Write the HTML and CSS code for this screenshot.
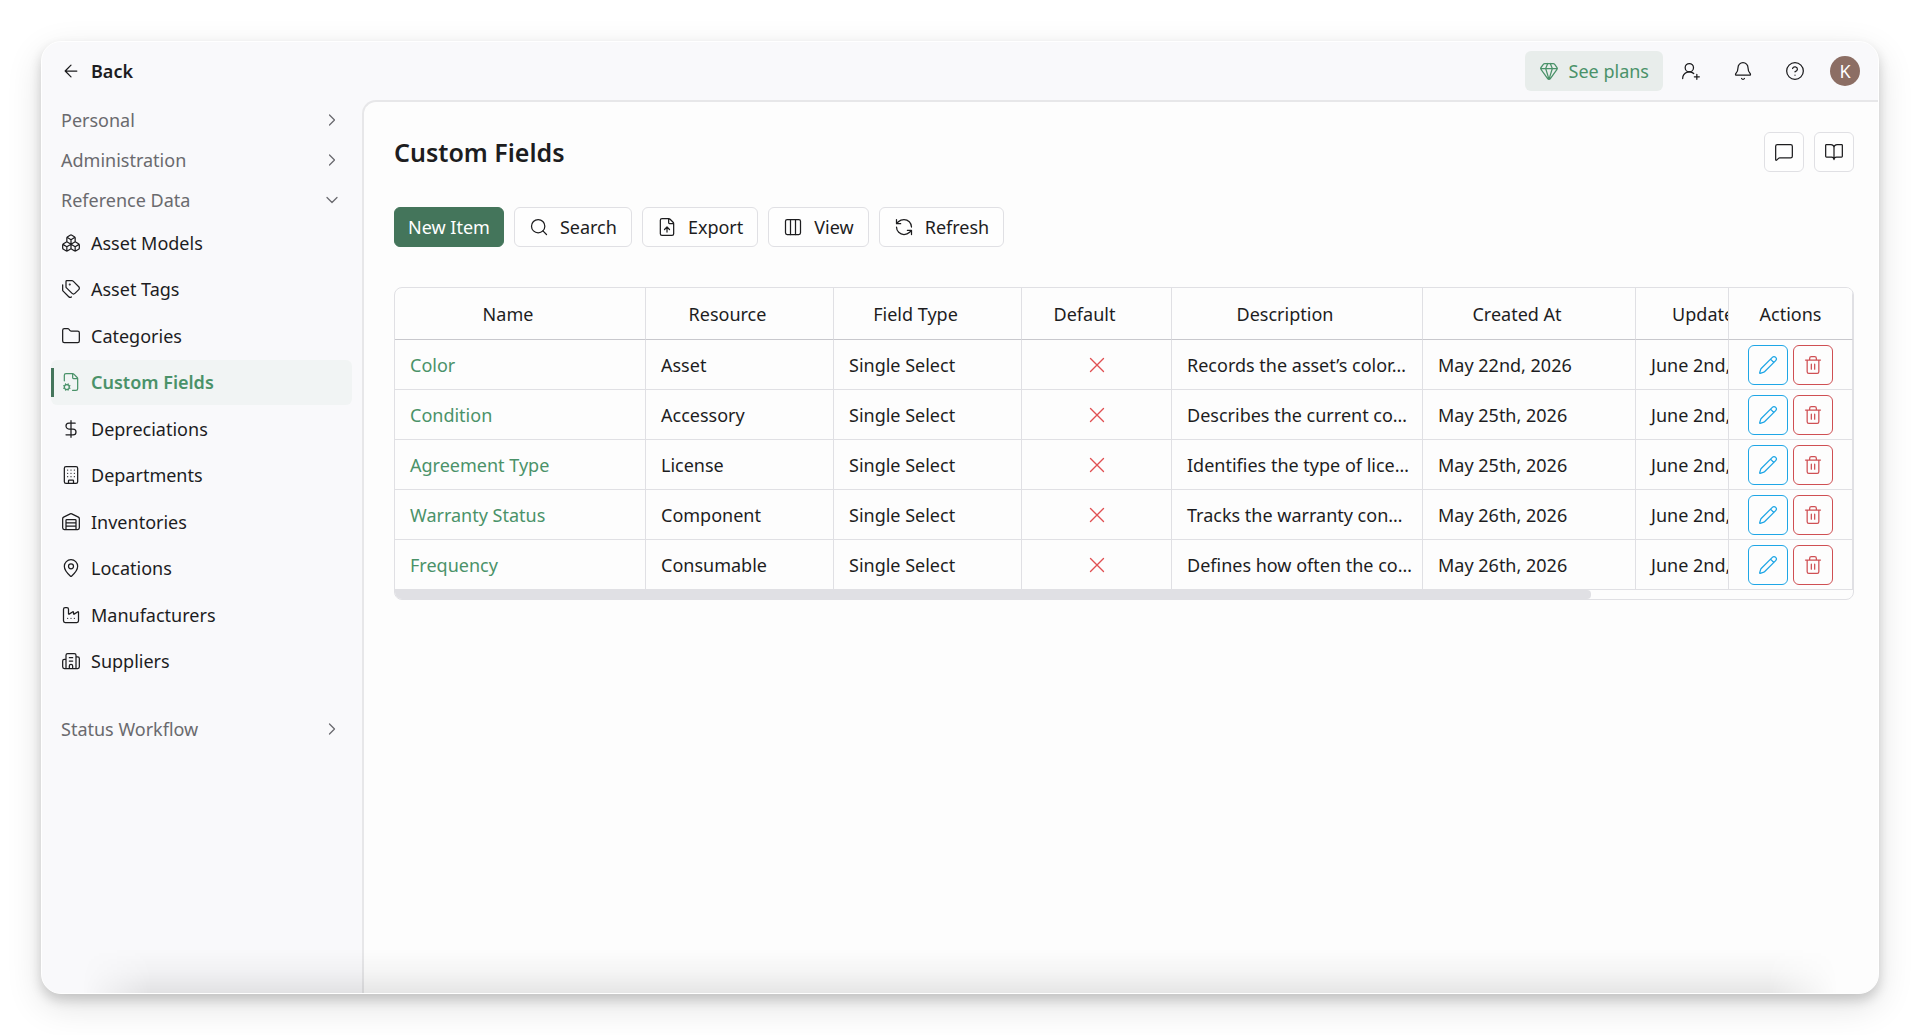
FILE: index.html
```html
<!DOCTYPE html>
<html lang="en">
<head>
    <meta charset="UTF-8">
    <meta name="viewport" content="width=device-width, initial-scale=1.0">
    <title>Custom Fields</title>
    <link rel="stylesheet" href="styles.css">
</head>
<body>

    <!-- Icon sprite -->
    <svg class="sprite" aria-hidden="true">
        <symbol id="arrow-left" viewBox="0 0 24 24"><path d="m12 19-7-7 7-7M19 12H5"/></symbol>
        <symbol id="chevron-right" viewBox="0 0 24 24"><path d="m9 18 6-6-6-6"/></symbol>
        <symbol id="chevron-down" viewBox="0 0 24 24"><path d="m6 9 6 6 6-6"/></symbol>
        <symbol id="gem" viewBox="0 0 24 24"><path d="M10.5 3 8 9l4 13 4-13-2.5-6M17 3a2 2 0 0 1 1.6.8l3 4a2 2 0 0 1 .013 2.382l-7.99 10.986a2 2 0 0 1-3.247 0l-7.99-10.986A2 2 0 0 1 2.4 7.8l2.998-3.997A2 2 0 0 1 7 3zM2 9h20"/></symbol>
        <symbol id="user-plus" viewBox="0 0 24 24"><path d="M2 21a8 8 0 0 1 13.292-6M19 16v6M22 19h-6"/><circle cx="10" cy="8" r="5"/></symbol>
        <symbol id="bell" viewBox="0 0 24 24"><path d="M10.268 21a2 2 0 0 0 3.464 0M3.262 15.326A1 1 0 0 0 4 17h16a1 1 0 0 0 .74-1.673C19.41 13.956 18 12.499 18 8A6 6 0 0 0 6 8c0 4.499-1.411 5.956-2.738 7.326"/></symbol>
        <symbol id="help" viewBox="0 0 24 24"><circle cx="12" cy="12" r="10"/><path d="M9.09 9a3 3 0 0 1 5.83 1c0 2-3 3-3 3M12 17h.01"/></symbol>
        <symbol id="message" viewBox="0 0 24 24"><path d="M22 17a2 2 0 0 1-2 2H6.828a2 2 0 0 0-1.414.586l-2.202 2.202A.71.71 0 0 1 2 21.286V5a2 2 0 0 1 2-2h16a2 2 0 0 1 2 2z"/></symbol>
        <symbol id="book-open" viewBox="0 0 24 24"><path d="M12 7v14M3 18a1 1 0 0 1-1-1V4a1 1 0 0 1 1-1h5a4 4 0 0 1 4 4 4 4 0 0 1 4-4h5a1 1 0 0 1 1 1v13a1 1 0 0 1-1 1h-6a3 3 0 0 0-3 3 3 3 0 0 0-3-3z"/></symbol>
        <symbol id="boxes" viewBox="0 0 24 24"><path d="M2.97 12.92A2 2 0 0 0 2 14.63v3.24a2 2 0 0 0 .97 1.71l3 1.8a2 2 0 0 0 2.06 0L12 19v-5.5l-5-3-4.03 2.42ZM7 16.5l-4.74-2.85M7 16.5l5-3M7 16.5v5.17M12 13.5V19l3.97 2.38a2 2 0 0 0 2.06 0l3-1.8a2 2 0 0 0 .97-1.71v-3.24a2 2 0 0 0-.97-1.71L17 10.5l-5 3ZM17 16.5l-5-3M17 16.5l4.74-2.85M17 16.5v5.17M7.97 4.42A2 2 0 0 0 7 6.13v4.37l5 3 5-3V6.13a2 2 0 0 0-.97-1.71l-3-1.8a2 2 0 0 0-2.06 0l-3 1.8ZM12 8 7.26 5.15M12 8l4.74-2.85M12 13.5V8"/></symbol>
        <symbol id="tags" viewBox="0 0 24 24"><path d="M13.172 2a2 2 0 0 1 1.414.586l6.71 6.71a2.4 2.4 0 0 1 0 3.408l-4.592 4.592a2.4 2.4 0 0 1-3.408 0l-6.71-6.71A2 2 0 0 1 6 9.172V3a1 1 0 0 1 1-1zM2 7v6.172a2 2 0 0 0 .586 1.414l6.71 6.71a2.4 2.4 0 0 0 3.191.193"/><circle cx="10.5" cy="6.5" r=".5"/></symbol>
        <symbol id="folder" viewBox="0 0 24 24"><path d="M20 20a2 2 0 0 0 2-2V8a2 2 0 0 0-2-2h-7.9a2 2 0 0 1-1.69-.9L9.6 3.9A2 2 0 0 0 7.93 3H4a2 2 0 0 0-2 2v13a2 2 0 0 0 2 2Z"/></symbol>
        <symbol id="file-cog" viewBox="0 0 24 24"><path d="M13.85 22H18a2 2 0 0 0 2-2V8a2 2 0 0 0-.586-1.414l-4-4A2 2 0 0 0 14 2H6a2 2 0 0 0-2 2v6.6M14 2v5a1 1 0 0 0 1 1h5M3.305 19.53l.923-.382M4.228 16.852l-.924-.383M5.852 15.228l-.383-.923M5.852 20.772l-.383.924M8.148 15.228l.383-.923M8.53 21.696l-.382-.924M9.773 16.852l.922-.383M9.773 19.148l.922.383"/><circle cx="7" cy="18" r="3"/></symbol>
        <symbol id="dollar" viewBox="0 0 24 24"><path d="M12 2v20M17 5H9.5a3.5 3.5 0 0 0 0 7h5a3.5 3.5 0 0 1 0 7H6"/></symbol>
        <symbol id="building" viewBox="0 0 24 24"><rect x="4" y="2" width="16" height="20" rx="2"/><path d="M9 22v-3a1 1 0 0 1 1-1h4a1 1 0 0 1 1 1v3M8 6h.01M12 6h.01M16 6h.01M8 10h.01M12 10h.01M16 10h.01M8 14h.01M12 14h.01M16 14h.01"/></symbol>
        <symbol id="warehouse" viewBox="0 0 24 24"><path d="M18 21V10a1 1 0 0 0-1-1H7a1 1 0 0 0-1 1v11M22 19a2 2 0 0 1-2 2H4a2 2 0 0 1-2-2V8a2 2 0 0 1 1.132-1.803l7.95-3.974a2 2 0 0 1 1.837 0l7.948 3.974A2 2 0 0 1 22 8zM6 13h12M6 17h12"/></symbol>
        <symbol id="map-pin" viewBox="0 0 24 24"><path d="M20 10c0 4.993-5.539 10.193-7.399 11.799a1 1 0 0 1-1.202 0C9.539 20.193 4 14.993 4 10a8 8 0 0 1 16 0"/><circle cx="12" cy="10" r="3"/></symbol>
        <symbol id="factory" viewBox="0 0 24 24"><path d="M8 16h.01M12 16h.01M16 16h.01M3 19a2 2 0 0 0 2 2h14a2 2 0 0 0 2-2V8.5a.5.5 0 0 0-.769-.422l-4.462 2.844A.5.5 0 0 1 15 10.5v-2a.5.5 0 0 0-.769-.422L9.77 10.922A.5.5 0 0 1 9 10.5V5a2 2 0 0 0-2-2H5a2 2 0 0 0-2 2z"/></symbol>
        <symbol id="suppliers" viewBox="0 0 24 24"><path d="M10 12h4M10 8h4M14 21v-3a2 2 0 0 0-4 0v3M6 10H4a2 2 0 0 0-2 2v7a2 2 0 0 0 2 2h16a2 2 0 0 0 2-2V9a2 2 0 0 0-2-2h-2M6 21V5a2 2 0 0 1 2-2h8a2 2 0 0 1 2 2v16"/></symbol>
        <symbol id="search" viewBox="0 0 24 24"><circle cx="11" cy="11" r="8"/><path d="m21 21-4.3-4.3"/></symbol>
        <symbol id="file-up" viewBox="0 0 24 24"><path d="M6 22a2 2 0 0 1-2-2V4a2 2 0 0 1 2-2h8a2.4 2.4 0 0 1 1.704.706l3.588 3.588A2.4 2.4 0 0 1 20 8v12a2 2 0 0 1-2 2zM14 2v5a1 1 0 0 0 1 1h5M12 12v6M15 15l-3-3-3 3"/></symbol>
        <symbol id="columns" viewBox="0 0 24 24"><rect x="3" y="3" width="18" height="18" rx="2"/><path d="M9 3v18M15 3v18"/></symbol>
        <symbol id="refresh" viewBox="0 0 24 24"><path d="M21 12a9 9 0 0 0-9-9 9.75 9.75 0 0 0-6.74 2.74L3 8M3 3v5h5M3 12a9 9 0 0 0 9 9 9.75 9.75 0 0 0 6.74-2.74L21 16M16 16h5v5"/></symbol>
        <symbol id="cross" viewBox="0 0 24 24"><path d="M18 6 6 18M6 6l12 12"/></symbol>
        <symbol id="pencil" viewBox="0 0 24 24"><path d="M21.174 6.812a1 1 0 0 0-3.986-3.987L3.842 16.174a2 2 0 0 0-.5.83l-1.321 4.352a.5.5 0 0 0 .623.622l4.353-1.32a2 2 0 0 0 .83-.497zM15 5l4 4"/></symbol>
        <symbol id="trash" viewBox="0 0 24 24"><path d="M3 6h18M19 6v14a2 2 0 0 1-2 2H7a2 2 0 0 1-2-2V6M8 6V4a2 2 0 0 1 2-2h4a2 2 0 0 1 2 2v2M10 11v6M14 11v6"/></symbol>
    </svg>

    <div class="window">

        <!-- Top Bar -->
        <header class="topbar">
            <a class="back" href="#"><svg class="icon"><use href="#arrow-left"/></svg>Back</a>
            <div class="topbar-actions">
                <button class="plans" type="button"><svg class="icon"><use href="#gem"/></svg>See plans</button>
                <button class="icon-btn" type="button" aria-label="Invite user"><svg class="icon"><use href="#user-plus"/></svg></button>
                <button class="icon-btn" type="button" aria-label="Notifications"><svg class="icon"><use href="#bell"/></svg></button>
                <button class="icon-btn" type="button" aria-label="Help"><svg class="icon"><use href="#help"/></svg></button>
                <button class="avatar" type="button">K</button>
            </div>
        </header>

        <div class="body">

            <!-- Sidebar -->
            <nav class="sidebar">
                <button class="group" type="button">Personal<svg class="icon"><use href="#chevron-right"/></svg></button>
                <button class="group" type="button">Administration<svg class="icon"><use href="#chevron-right"/></svg></button>
                <button class="group" type="button">Reference Data<svg class="icon"><use href="#chevron-down"/></svg></button>
                <div class="links">
                    <a href="#"><svg class="icon"><use href="#boxes"/></svg>Asset Models</a>
                    <a href="#"><svg class="icon"><use href="#tags"/></svg>Asset Tags</a>
                    <a href="#"><svg class="icon"><use href="#folder"/></svg>Categories</a>
                    <a href="#" class="active"><svg class="icon"><use href="#file-cog"/></svg>Custom Fields</a>
                    <a href="#"><svg class="icon"><use href="#dollar"/></svg>Depreciations</a>
                    <a href="#"><svg class="icon"><use href="#building"/></svg>Departments</a>
                    <a href="#"><svg class="icon"><use href="#warehouse"/></svg>Inventories</a>
                    <a href="#"><svg class="icon"><use href="#map-pin"/></svg>Locations</a>
                    <a href="#"><svg class="icon"><use href="#factory"/></svg>Manufacturers</a>
                    <a href="#"><svg class="icon"><use href="#suppliers"/></svg>Suppliers</a>
                </div>
                <button class="group" type="button">Status Workflow<svg class="icon"><use href="#chevron-right"/></svg></button>
            </nav>

            <!-- Main Content -->
            <main class="content">
                <div class="page-head">
                    <h1>Custom Fields</h1>
                    <div class="page-tools">
                        <button class="btn square" type="button" aria-label="Feedback"><svg class="icon"><use href="#message"/></svg></button>
                        <button class="btn square" type="button" aria-label="Documentation"><svg class="icon"><use href="#book-open"/></svg></button>
                    </div>
                </div>

                <div class="toolbar">
                    <button class="btn primary" type="button">New Item</button>
                    <button class="btn" type="button"><svg class="icon"><use href="#search"/></svg>Search</button>
                    <button class="btn" type="button"><svg class="icon"><use href="#file-up"/></svg>Export</button>
                    <button class="btn" type="button"><svg class="icon"><use href="#columns"/></svg>View</button>
                    <button class="btn" type="button"><svg class="icon"><use href="#refresh"/></svg>Refresh</button>
                </div>

                <div class="table-card">
                    <div class="table-scroll">
                        <table>
                            <colgroup>
                                <col class="col-wide">
                                <col class="col-mid">
                                <col class="col-mid">
                                <col class="col-narrow">
                                <col class="col-wide">
                                <col class="col-created">
                                <col class="col-updated">
                                <col>
                                <col class="col-actions">
                            </colgroup>
                            <thead>
                                <tr>
                                    <th>Name</th>
                                    <th>Resource</th>
                                    <th>Field Type</th>
                                    <th>Default</th>
                                    <th>Description</th>
                                    <th>Created At</th>
                                    <th>Updated At</th>
                                    <th></th>
                                    <th class="actions">Actions</th>
                                </tr>
                            </thead>
                            <tbody>
                                <tr>
                                    <td><a href="#">Color</a></td>
                                    <td>Asset</td>
                                    <td>Single Select</td>
                                    <td class="flag"><svg class="icon"><use href="#cross"/></svg></td>
                                    <td>Records the asset’s color…</td>
                                    <td>May 22nd, 2026</td>
                                    <td>June 2nd, 2026</td>
                                    <td></td>
                                    <td class="actions"><div class="row-actions">
                                        <button class="edit" type="button" aria-label="Edit"><svg class="icon"><use href="#pencil"/></svg></button>
                                        <button class="delete" type="button" aria-label="Delete"><svg class="icon"><use href="#trash"/></svg></button>
                                    </div></td>
                                </tr>
                                <tr>
                                    <td><a href="#">Condition</a></td>
                                    <td>Accessory</td>
                                    <td>Single Select</td>
                                    <td class="flag"><svg class="icon"><use href="#cross"/></svg></td>
                                    <td>Describes the current co…</td>
                                    <td>May 25th, 2026</td>
                                    <td>June 2nd, 2026</td>
                                    <td></td>
                                    <td class="actions"><div class="row-actions">
                                        <button class="edit" type="button" aria-label="Edit"><svg class="icon"><use href="#pencil"/></svg></button>
                                        <button class="delete" type="button" aria-label="Delete"><svg class="icon"><use href="#trash"/></svg></button>
                                    </div></td>
                                </tr>
                                <tr>
                                    <td><a href="#">Agreement Type</a></td>
                                    <td>License</td>
                                    <td>Single Select</td>
                                    <td class="flag"><svg class="icon"><use href="#cross"/></svg></td>
                                    <td>Identifies the type of lice…</td>
                                    <td>May 25th, 2026</td>
                                    <td>June 2nd, 2026</td>
                                    <td></td>
                                    <td class="actions"><div class="row-actions">
                                        <button class="edit" type="button" aria-label="Edit"><svg class="icon"><use href="#pencil"/></svg></button>
                                        <button class="delete" type="button" aria-label="Delete"><svg class="icon"><use href="#trash"/></svg></button>
                                    </div></td>
                                </tr>
                                <tr>
                                    <td><a href="#">Warranty Status</a></td>
                                    <td>Component</td>
                                    <td>Single Select</td>
                                    <td class="flag"><svg class="icon"><use href="#cross"/></svg></td>
                                    <td>Tracks the warranty con…</td>
                                    <td>May 26th, 2026</td>
                                    <td>June 2nd, 2026</td>
                                    <td></td>
                                    <td class="actions"><div class="row-actions">
                                        <button class="edit" type="button" aria-label="Edit"><svg class="icon"><use href="#pencil"/></svg></button>
                                        <button class="delete" type="button" aria-label="Delete"><svg class="icon"><use href="#trash"/></svg></button>
                                    </div></td>
                                </tr>
                                <tr>
                                    <td><a href="#">Frequency</a></td>
                                    <td>Consumable</td>
                                    <td>Single Select</td>
                                    <td class="flag"><svg class="icon"><use href="#cross"/></svg></td>
                                    <td>Defines how often the co…</td>
                                    <td>May 26th, 2026</td>
                                    <td>June 2nd, 2026</td>
                                    <td></td>
                                    <td class="actions"><div class="row-actions">
                                        <button class="edit" type="button" aria-label="Edit"><svg class="icon"><use href="#pencil"/></svg></button>
                                        <button class="delete" type="button" aria-label="Delete"><svg class="icon"><use href="#trash"/></svg></button>
                                    </div></td>
                                </tr>
                            </tbody>
                        </table>
                    </div>
                    <div class="scrollbar"><div class="thumb"></div></div>
                </div>
            </main>
        </div>
    </div>

</body>
</html>
```
FILE: styles.css
```css
* {
    box-sizing: border-box;
}

body {
    margin: 0;
    min-height: 100vh;
    padding: 41px;
    display: flex;
    background-color: #fff;
    color: #1d1d1f;
    font-family: "Noto Sans", sans-serif;
    font-size: 18px;
    line-height: 24px;
}

a {
    color: inherit;
    text-decoration: none;
}

button {
    padding: 0;
    border: none;
    background: none;
    color: inherit;
    font: inherit;
    cursor: pointer;
}

.sprite {
    display: none;
}

.icon {
    width: 20px;
    height: 20px;
    flex: none;
    fill: none;
    stroke: currentColor;
    stroke-width: 1.5;
    stroke-linecap: round;
    stroke-linejoin: round;
}

/* Window */
.window {
    position: relative;
    flex: 1;
    min-width: 0;
    display: flex;
    flex-direction: column;
    overflow: hidden;
    border: 1px solid #fff;
    border-radius: 20px;
    background-color: #f9f9fb;
    box-shadow: 0 6px 12px rgba(0, 0, 0, 0.16), 0 12px 36px rgba(0, 0, 0, 0.12);
}

/* soft shade along the bottom edge */
.window::after {
    content: "";
    position: absolute;
    left: 40px;
    right: 40px;
    bottom: 0;
    height: 44px;
    background: linear-gradient(transparent, rgba(0, 0, 0, 0.03) 50%, rgba(0, 0, 0, 0.09));
    mask-image: linear-gradient(to right, transparent, #000 70px, #000 calc(100% - 70px), transparent);
    pointer-events: none;
}

/* Top bar */
.topbar {
    height: 58px;
    padding: 0 18px 0 19px;
    display: flex;
    align-items: center;
    justify-content: space-between;
}

.back {
    display: flex;
    align-items: center;
    gap: 10px;
    font-weight: 600;
}

.topbar-actions {
    display: flex;
    align-items: center;
    gap: 12px;
}

.plans {
    height: 40px;
    padding: 0 14px;
    display: flex;
    align-items: center;
    gap: 10px;
    border-radius: 6px;
    background-color: #e8edeb;
    color: #4a9269;
}

.icon-btn {
    width: 40px;
    height: 40px;
    display: flex;
    align-items: center;
    justify-content: center;
}

.plans + .icon-btn {
    margin-left: -4px;
}

.avatar {
    width: 30px;
    height: 30px;
    margin-left: 3px;
    border-radius: 50%;
    background-color: #8c6e64;
    color: #fff;
    font-size: 18px;
}

/* Layout */
.body {
    flex: 1;
    display: flex;
    min-width: 0;
}

.sidebar {
    width: 320px;
    flex: none;
    padding: 0 10px 0 9px;
    display: flex;
    flex-direction: column;
}

.group {
    height: 40px;
    padding: 0 10px;
    display: flex;
    align-items: center;
    justify-content: space-between;
    color: #6a6a6e;
}

.links {
    height: 464px;
    margin-bottom: 25px;
    display: grid;
    grid-auto-rows: 1fr;
    gap: 1px;
}

.links a {
    position: relative;
    padding: 0 10px;
    display: flex;
    align-items: center;
    gap: 10px;
    border-radius: 6px;
}

.links a.active {
    background-color: #f1f4f4;
    color: #4a9269;
    font-weight: 600;
}

.links a.active::before {
    content: "";
    position: absolute;
    left: 0;
    top: 8px;
    bottom: 8px;
    width: 3px;
    background-color: #44755b;
}

.content {
    flex: 1;
    min-width: 0;
    padding: 30px 24px 30px 30px;
    border-top: 2px solid #e7e7e9;
    border-left: 2px solid #e7e7e9;
    border-top-left-radius: 14px;
    background-color: #fdfdfd;
}

/* Page header */
.page-head {
    display: flex;
    align-items: center;
    justify-content: space-between;
    margin-bottom: 35px;
}

h1 {
    margin: 0;
    font-size: 25px;
    line-height: 36px;
    font-weight: 600;
}

.page-tools,
.toolbar {
    display: flex;
    gap: 10px;
}

.btn {
    height: 40px;
    padding: 0 14px;
    display: flex;
    align-items: center;
    justify-content: center;
    gap: 11px;
    border: 1px solid #e0e0e4;
    border-radius: 6px;
    background-color: #fefefe;
}

.btn.square {
    width: 40px;
    padding: 0;
}

.btn.primary {
    padding: 0 13px;
    border-color: #44755b;
    background-color: #44755b;
    color: #fff;
}

/* Table */
.table-card {
    margin-top: 40px;
    overflow: hidden;
    border: 1px solid #e0e0e4;
    border-radius: 8px;
}

.table-scroll {
    overflow-x: auto;
    scrollbar-width: none;
}

table {
    width: 100%;
    min-width: 1780px;
    table-layout: fixed;
    border-collapse: separate;
    border-spacing: 0;
}

.col-wide {
    width: 251px;
}

.col-mid {
    width: 188px;
}

.col-narrow {
    width: 150px;
}

.col-created {
    width: 213px;
}

.col-updated {
    width: 193px;
}

.col-actions {
    width: 125px;
}

th,
td {
    height: 50px;
    padding: 0 15px;
    border-right: 1px solid #e0e0e4;
    border-bottom: 1px solid #e0e0e4;
    text-align: left;
    white-space: nowrap;
    overflow: hidden;
}

th {
    height: 52px;
    padding-right: 39px;
    border-bottom-color: #c8c8cd;
    font-weight: 400;
    text-align: center;
}

td a {
    color: #4a9269;
}

.flag {
    text-align: center;
    color: #e04f52;
}

.flag .icon {
    display: block;
    width: 26px;
    height: 26px;
    margin: 0 auto;
    stroke-width: 1.25;
}

.actions {
    position: sticky;
    right: 0;
    padding: 0;
    border-left: 1px solid #e0e0e4;
    background-color: #fdfdfd;
}

.row-actions {
    display: flex;
    justify-content: center;
    gap: 5px;
}

.row-actions button {
    width: 40px;
    height: 40px;
    display: flex;
    align-items: center;
    justify-content: center;
    border: 1px solid currentColor;
    border-radius: 6px;
}

.edit {
    color: #1ea6e6;
}

.delete {
    color: #cf4f53;
}

.scrollbar {
    height: 9px;
}

.thumb {
    width: 82%;
    height: 100%;
    border-radius: 0 4px 4px 0;
    background-color: #e0e0e4;
}
```
